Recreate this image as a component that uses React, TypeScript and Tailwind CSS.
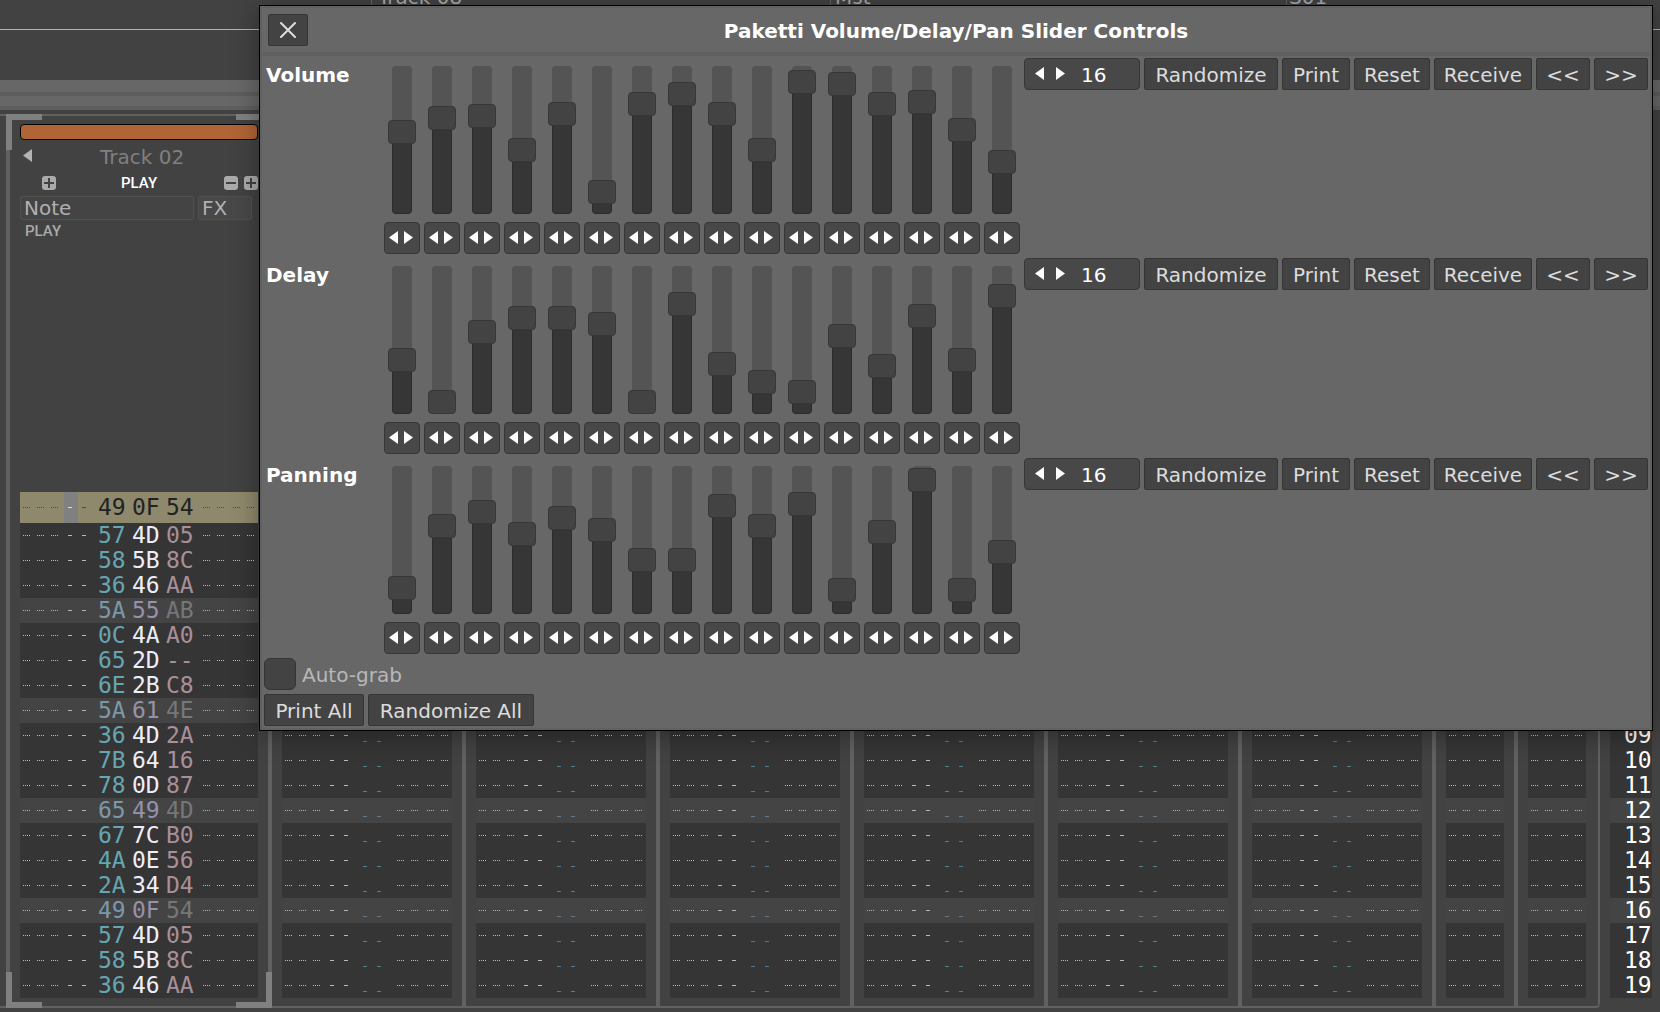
import { useState } from 'react';

const LEFT_ROWS: [string, string, string][] = [
  ['57', '4D', '05'],
  ['58', '5B', '8C'],
  ['36', '46', 'AA'],
  ['5A', '55', 'AB'],
  ['0C', '4A', 'A0'],
  ['65', '2D', '--'],
  ['6E', '2B', 'C8'],
  ['5A', '61', '4E'],
  ['36', '4D', '2A'],
  ['7B', '64', '16'],
  ['78', '0D', '87'],
  ['65', '49', '4D'],
  ['67', '7C', 'B0'],
  ['4A', '0E', '56'],
  ['2A', '34', 'D4'],
  ['49', '0F', '54'],
  ['57', '4D', '05'],
  ['58', '5B', '8C'],
  ['36', '46', 'AA'],
];

const LINES = LEFT_ROWS.map((_, i) => i + 1);
const isBeat = (line: number) => line % 4 === 0;

const SLIDER_MAX = 124;
const GROUPS = [
  { name: 'Volume', values: [70, 84, 86, 52, 88, 10, 98, 108, 88, 52, 120, 118, 98, 100, 72, 40] },
  { name: 'Delay', values: [42, 0, 70, 84, 84, 78, 0, 98, 38, 20, 10, 66, 36, 86, 42, 106] },
  { name: 'Panning', values: [14, 76, 90, 68, 84, 72, 42, 42, 96, 76, 98, 12, 70, 122, 12, 50] },
];

function Triangle({ dir, className = '' }: { dir: 'left' | 'right'; className?: string }) {
  return (
    <svg viewBox="0 0 9 13" className={`h-[13px] w-[9px] shrink-0 ${className}`} fill="currentColor" aria-hidden="true">
      <path d={dir === 'left' ? 'M9 0V13L0 6.5Z' : 'M0 0V13L9 6.5Z'} />
    </svg>
  );
}

function Dots() {
  return <span className="w-[7px] shrink-0 border-t border-dotted border-current" />;
}

function NoteDashes({ cursor = false }: { cursor?: boolean }) {
  return (
    <span className="flex h-full items-center pl-[3px]">
      <span className="mr-1.5 flex gap-[7px]">
        <Dots />
        <Dots />
        <Dots />
      </span>
      <span className={`flex w-3.5 items-center pl-1 ${cursor ? 'h-full bg-[#808080] text-[#dddddd]' : ''}`}>
        <span className="h-px w-1 bg-current" />
      </span>
      <span className="flex w-3.5 pl-1">
        <span className="h-px w-1 bg-current" />
      </span>
    </span>
  );
}

function FxDashes() {
  return (
    <span className="flex items-center gap-[9px]">
      <span className="flex gap-[7px]">
        <Dots />
        <Dots />
      </span>
      <span className="flex gap-[7px]">
        <Dots />
        <Dots />
      </span>
    </span>
  );
}

function PatternRow({ cells, kind }: { cells: [string, string, string]; kind: 'cursor' | 'beat' | 'plain' }) {
  const row = {
    cursor: 'h-[31px] bg-[#8e896c] text-[#4c4a3c]',
    beat: 'h-[25px] bg-[#444444] text-[#b4b4b4]',
    plain: 'h-[25px] bg-[#353535] text-[#bababa]',
  }[kind];
  const colors = {
    cursor: ['text-[#222222]', 'text-[#222222]', 'text-[#222222]'],
    beat: ['text-[#7b98aa]', 'text-[#9791ab]', 'text-[#777777]'],
    plain: ['text-[#66a5b3]', 'text-[#eeeef8]', 'text-[#a98f99]'],
  }[kind];
  return (
    <tr className={row}>
      <td className="w-[78px] p-0">
        <div className={kind === 'cursor' ? 'h-[31px]' : 'h-[25px]'}>
          <NoteDashes cursor={kind === 'cursor'} />
        </div>
      </td>
      {cells.map((c, i) => (
        <td key={i} className={`w-[34px] p-0 ${colors[i]}`}>
          <div className="font-['DejaVu_Sans_Mono',monospace] text-[23px] leading-[23px]">{c}</div>
        </td>
      ))}
      <td className="p-0 pl-[3px]">
        <FxDashes />
      </td>
    </tr>
  );
}

function TrackColumn() {
  return (
    <div className="flex w-[194px] shrink-0 flex-col justify-end border-r-4 border-[#616161] px-2.5 pb-2">
      {LINES.map((n) => (
        <div
          key={n}
          className={`flex h-[25px] items-center ${isBeat(n) ? 'bg-[#444444] text-[#b4b4b4]' : 'bg-[#353535] text-[#bababa]'}`}
        >
          <NoteDashes />
          <span className={`mt-3 mr-4 ml-[9px] flex gap-2.5 ${isBeat(n) ? 'text-[#61788a]' : 'text-[#4f7f8a]'}`}>
            <span className="h-px w-1 bg-current" />
            <span className="h-px w-1 bg-current" />
          </span>
          <FxDashes />
        </div>
      ))}
    </div>
  );
}

function SendColumn({ last = false }: { last?: boolean }) {
  return (
    <div
      className={`flex shrink-0 flex-col justify-end border-[#616161] pb-2 pl-2.5 ${
        last ? 'w-[82px] rounded-br border-r-2 pr-3' : 'w-[82px] border-r-4 pr-2.5'
      }`}
    >
      {LINES.map((n) => (
        <div
          key={n}
          className={`flex h-[25px] items-center pl-[3px] ${isBeat(n) ? 'bg-[#444444] text-[#b4b4b4]' : 'bg-[#353535] text-[#bababa]'}`}
        >
          <FxDashes />
        </div>
      ))}
    </div>
  );
}

function SquareButton({ kind, label }: { kind: 'plus' | 'minus'; label: string }) {
  return (
    <button type="button" aria-label={label} className="size-3.5 shrink-0">
      <svg viewBox="0 0 14 14" className="size-3.5" aria-hidden="true">
        <rect width="14" height="14" rx="3" fill="#aaaaaa" />
        <path d={kind === 'plus' ? 'M2 7H12M7 2V12' : 'M2 7H12'} stroke="#424242" strokeWidth="2" />
      </svg>
    </button>
  );
}

function SelectedTrack() {
  return (
    <section className="relative flex w-[266px] shrink-0 flex-col border-x-4 border-[#616161] px-2.5 pt-2 pb-2">
      <div className="absolute -top-0.5 -left-1 size-9 border-t-6 border-l-6 border-[#808080]" />
      <div className="absolute -top-0.5 -right-1 size-9 border-t-6 border-r-6 border-[#808080]" />
      <div className="absolute -bottom-0.5 -left-1 size-9 border-b-6 border-l-6 border-[#808080]" />
      <div className="absolute -right-1 -bottom-0.5 size-9 border-r-6 border-b-6 border-[#808080]" />
      <div className="h-4 rounded border border-black bg-[#b16436]" />
      <div className="mt-[5px] flex h-6 items-center pl-[3px] text-[#808080]">
        <button type="button" aria-label="Previous track" className="-mt-1 text-[#b4b4b4]">
          <Triangle dir="left" />
        </button>
        <h2 className="ml-[68px]">Track 02</h2>
      </div>
      <div className="mt-[7px] flex h-3.5 items-center pl-[22px]">
        <SquareButton kind="plus" label="Add note column" />
        <span className="ml-[65px] font-[Roboto,sans-serif] text-[15px] leading-[14px] font-medium text-white">PLAY</span>
        <span className="ml-auto flex gap-1.5">
          <SquareButton kind="minus" label="Remove effect column" />
          <SquareButton kind="plus" label="Add effect column" />
        </span>
      </div>
      <div className="mt-1.5 flex gap-1 text-[#b0b0b0]">
        <div className="h-6 w-[174px] rounded-xs border border-[#505050] bg-[#444444] pl-[3px] leading-[22px]">Note</div>
        <div className="h-6 w-[54px] rounded-xs border border-[#505050] bg-[#484848] pl-[3px] leading-[22px]">FX</div>
      </div>
      <div className="mt-1 pl-[5px] font-[Roboto,sans-serif] text-[15px] leading-[14px] font-medium text-[#aaaaaa]">PLAY</div>
      <table className="mt-[254px] w-full table-fixed border-collapse">
        <tbody>
          <PatternRow cells={['49', '0F', '54']} kind="cursor" />
          {LEFT_ROWS.map((cells, i) => (
            <PatternRow key={i} cells={cells} kind={isBeat(i + 1) ? 'beat' : 'plain'} />
          ))}
        </tbody>
      </table>
    </section>
  );
}

function Slider({ label, initial }: { label: string; initial: number }) {
  const [value, setValue] = useState(initial);
  return (
    <div className="flex w-9 flex-col items-center gap-2">
      <div className="relative h-[148px] w-7">
        <div className="mx-1 h-full rounded bg-[#545454]" />
        <div
          className={`absolute inset-x-1 bottom-0 rounded-b border-[#2c2c2c] bg-[#363636] ${value > 0 ? 'border' : ''}`}
          style={{ height: value + 12 }}
        />
        <input
          type="range"
          aria-label={label}
          min={0}
          max={SLIDER_MAX}
          value={value}
          onChange={(e) => setValue(Number(e.target.value))}
          className="absolute inset-0 m-0 h-full w-7 cursor-pointer appearance-none bg-transparent [direction:rtl] [writing-mode:vertical-lr] [&::-webkit-slider-thumb]:box-border [&::-webkit-slider-thumb]:h-6 [&::-webkit-slider-thumb]:w-7 [&::-webkit-slider-thumb]:appearance-none [&::-webkit-slider-thumb]:rounded [&::-webkit-slider-thumb]:border [&::-webkit-slider-thumb]:border-solid [&::-webkit-slider-thumb]:border-[#373737] [&::-webkit-slider-thumb]:bg-[#434343]"
        />
      </div>
      <div className="flex h-8 w-9 items-center justify-center rounded border border-[#373737] bg-[#484848] pr-0.5 pb-0.5 text-white">
        <button type="button" aria-label={`${label} down`} className="pr-[3px]" onClick={() => setValue((v) => Math.max(0, v - 1))}>
          <Triangle dir="left" />
        </button>
        <button type="button" aria-label={`${label} up`} className="pl-[3px]" onClick={() => setValue((v) => Math.min(SLIDER_MAX, v + 1))}>
          <Triangle dir="right" />
        </button>
      </div>
    </div>
  );
}

function Button({ children, className }: { children: string; className: string }) {
  return (
    <button
      type="button"
      className={`flex h-8 items-center justify-center rounded-xs border border-[#353535] bg-[#434343] pt-0.5 leading-6 whitespace-nowrap text-[#dcdcdc] ${className}`}
    >
      {children}
    </button>
  );
}

function SliderGroup({ name, values }: { name: string; values: number[] }) {
  const [steps, setSteps] = useState(16);
  return (
    <section className="flex pb-1">
      <h2 className="h-8 w-[118px] shrink-0 leading-[34px] font-bold text-white">{name}</h2>
      <div className="flex shrink-0 gap-1 pt-2">
        {values.map((v, i) => (
          <Slider key={i} label={`${name} ${i + 1}`} initial={v} />
        ))}
      </div>
      <div className="ml-auto flex shrink-0 gap-1">
        <div className="flex h-8 w-[116px] items-center rounded border border-[#373737] bg-[#484848] pl-2.5 text-white">
          <button type="button" aria-label={`Fewer ${name} steps`} className="pb-0.5" onClick={() => setSteps((s) => Math.max(1, s - 1))}>
            <Triangle dir="left" />
          </button>
          <button type="button" aria-label={`More ${name} steps`} className="ml-3 pb-0.5" onClick={() => setSteps((s) => s + 1)}>
            <Triangle dir="right" />
          </button>
          <input
            aria-label={`${name} steps`}
            value={steps}
            onChange={(e) => setSteps(Number(e.target.value) || 0)}
            className="ml-4 w-10 bg-transparent pt-0.5 leading-6 outline-none"
          />
        </div>
        <Button className="w-[134px]">Randomize</Button>
        <Button className="w-[68px]">Print</Button>
        <Button className="w-[76px]">Reset</Button>
        <Button className="w-[98px]">Receive</Button>
        <Button className="w-[54px]">{'<<'}</Button>
        <Button className="w-[54px]">{'>>'}</Button>
      </div>
    </section>
  );
}

function SliderDialog() {
  return (
    <div
      role="dialog"
      aria-labelledby="dialog-title"
      className="absolute top-[5px] right-[7px] left-[259px] border border-black bg-[#676767] shadow-[0_4px_24px_rgba(0,0,0,0.35)]"
    >
      <div className="border-2 border-[#616161]">
        <header className="relative flex h-11 items-center justify-center">
          <button
            type="button"
            aria-label="Close"
            className="absolute top-1.5 left-1.5 flex h-8 w-10 items-center justify-center rounded-xs border border-[#353535] bg-[#434343] text-[#dcdcdc]"
          >
            <svg viewBox="0 0 16 16" className="size-4" aria-hidden="true">
              <path d="M1 1L15 15M15 1L1 15" stroke="currentColor" strokeWidth="2" strokeLinecap="round" />
            </svg>
          </button>
          <h1 id="dialog-title" className="pt-0.5 font-bold text-white">
            Paketti Volume/Delay/Pan Slider Controls
          </h1>
        </header>
        <div className="h-1 bg-[#606060]" />
        <div className="p-0.5">
          <div className="pl-0.5">
            {GROUPS.map((g) => (
              <SliderGroup key={g.name} name={g.name} values={g.values} />
            ))}
          </div>
          <label className="flex h-8 w-fit gap-1.5 leading-[34px] text-[#b8b8b8]">
            <input type="checkbox" className="size-8 appearance-none rounded-md border border-[#353535] bg-[#434343] checked:bg-[#b16436]" />
            Auto-grab
          </label>
          <div className="mt-1 flex gap-1">
            <Button className="w-[100px]">Print All</Button>
            <Button className="w-[166px]">Randomize All</Button>
          </div>
        </div>
      </div>
    </div>
  );
}

export default function App() {
  return (
    <div className="relative min-h-screen overflow-hidden bg-[#424242] font-['DejaVu_Sans',sans-serif] text-[20px] leading-6">
      <div className="h-[30px] border-b border-[#b4b4b4] text-[#aaaaaa]">
        <div className="flex h-[9px] items-end">
          <span className="ml-[371px] w-[459px] border-l border-[#616161] pl-1.5">Track 08</span>
          <span className="w-[456px] border-l border-[#616161] pl-1">Mst</span>
          <span className="border-l border-[#616161] pl-0.5">S01</span>
        </div>
      </div>
      <div className="h-[50px]" />
      <div className="h-4 border-b-4 border-[#5d5d5d] bg-[#676767]" />
      <div className="h-3.5 border-b-4 border-[#5f5f5f] bg-[#676767]" />
      <main className="mt-1 flex">
        <div className="w-1.5 shrink-0 border-y-2 border-[#616161]" />
        <div className="flex shrink-0 rounded-br border-y-2 border-[#616161]">
          <SelectedTrack />
          {[3, 4, 5, 6, 7, 8].map((n) => (
            <TrackColumn key={n} />
          ))}
          <SendColumn />
          <SendColumn last />
        </div>
        <ol className="ml-2.5 flex w-[42px] shrink-0 flex-col justify-end pb-2.5 font-['DejaVu_Sans_Mono',monospace] text-[23px] leading-6 text-white">
          {LINES.map((n) => (
            <li key={n} className={`h-[25px] pl-3.5 ${isBeat(n) ? 'bg-[#444444]' : 'bg-[#353535]'}`}>
              {String(n).padStart(2, '0')}
            </li>
          ))}
        </ol>
      </main>
      <SliderDialog />
    </div>
  );
}
